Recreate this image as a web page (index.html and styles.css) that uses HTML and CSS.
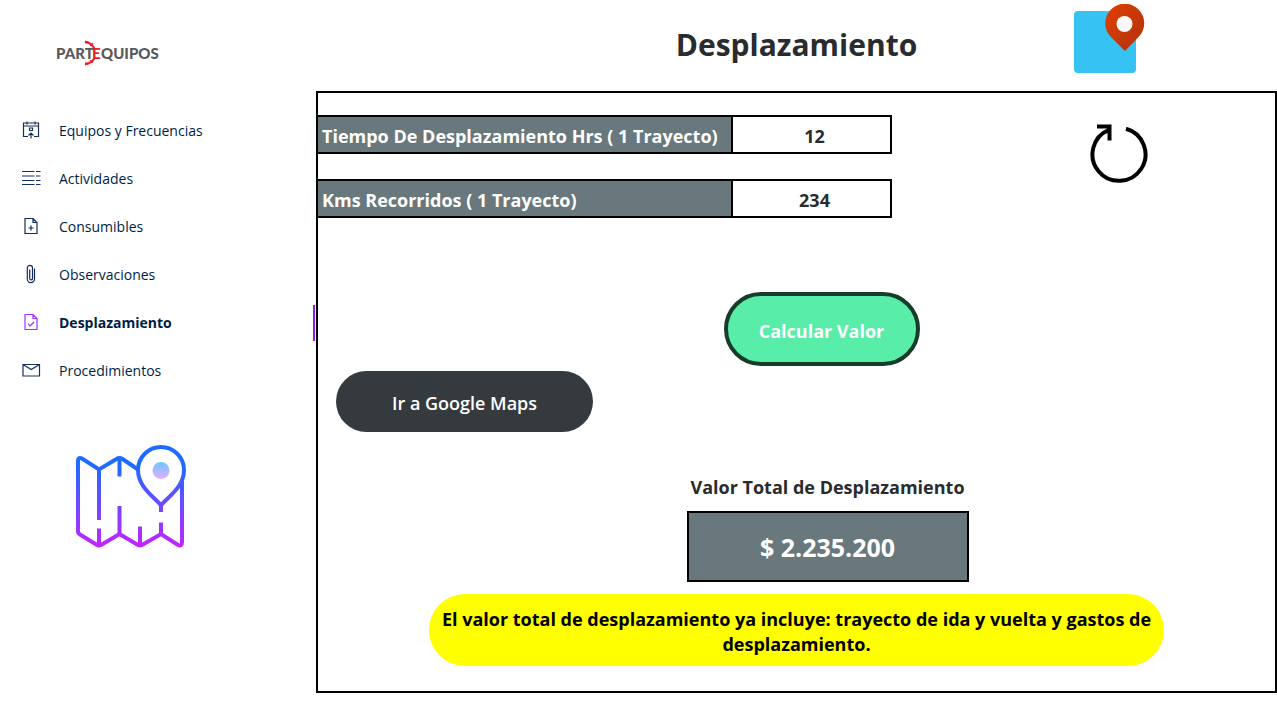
FILE: index.html
```html
<!DOCTYPE html>
<html lang="es">
<head>
<meta charset="utf-8">
<meta name="viewport" content="width=device-width, initial-scale=1">
<title>Desplazamiento</title>
<link rel="stylesheet" href="styles.css">
</head>
<body>
<div class="app">
  <aside class="sidebar">
    <svg class="logo" viewBox="0 0 104 26" role="img" aria-label="Partequipos">
      <text class="logo-text" x="0" y="19">PART</text>
      <text class="logo-text logo-red" x="36" y="19">E</text>
      <text class="logo-text" x="45" y="19">QUIPOS</text>
      <path d="M29 1.500Q36 3 38.500 9M29 24.500Q36 23 38.500 18" fill="none" stroke="#e8202a" stroke-width="2"/>
      <path d="M29 2.500h3M34 5.500l3-2M29 23.500h3M34 20.500l3 2" fill="none" stroke="#e8202a" stroke-width="2"/>
    </svg>
    <nav class="menu">
      <a class="item" href="#equipos">
        <svg class="icon" viewBox="0 0 20 20"><path d="M7 16.500H2.500V3H17.500V16.500H13M2.500 6H17.500M6 1.500V4.500M14 1.500V4.500M8.500 8h3v2.500h-3zM10 18.500V13M7.500 15.500l2.500-2.500 2.500 2.500"/></svg>
        Equipos y Frecuencias</a>
      <a class="item" href="#actividades">
        <svg class="icon" viewBox="0 0 20 20"><path d="M1 3.500H13.500M1 8H13.500M1 12.500H13.500M1 16.500H13.500M15 3.500H19.500M15 8H19.500M15 12.500H19.500M15 16.500H19.500"/></svg>
        Actividades</a>
      <a class="item" href="#consumibles">
        <svg class="icon" viewBox="0 0 20 20"><path d="M4 2.500H12L16 6.500V17.500H4ZM12 2.500V6.500H16M10 9.500V14.500M7.500 12H12.500"/></svg>
        Consumibles</a>
      <a class="item" href="#observaciones">
        <svg class="icon" viewBox="0 0 20 20"><path d="M13.500 4.500V15a3.600 3.600 0 0 1-7.200 0V4a2.600 2.600 0 0 1 5.200 0V14.500a1.400 1.400 0 0 1-2.800 0V5.500"/></svg>
        Observaciones</a>
      <a class="item active" href="#desplazamiento" aria-current="page">
        <svg class="icon" viewBox="0 0 20 20"><path d="M4 2.500H12L16 6.500V17.500H4ZM12 2.500V6.500H16M7 11.500l2 2.500 4-4"/></svg>
        Desplazamiento</a>
      <a class="item" href="#procedimientos">
        <svg class="icon" viewBox="0 0 20 20"><path d="M2 4.500H18.500V16H2ZM2 4.500l8.200 5 8.300-5"/></svg>
        Procedimientos</a>
    </nav>
    <svg class="map" viewBox="0 0 112 104" aria-hidden="true">
      <defs>
        <linearGradient id="line" gradientUnits="userSpaceOnUse" x1="0" y1="0" x2="0" y2="104">
          <stop offset="0" stop-color="#1a6dff"/><stop offset=".2" stop-color="#1f6bff"/><stop offset="1" stop-color="#c822ff"/>
        </linearGradient>
        <linearGradient id="dot" x1="0" y1="0" x2="0" y2="1">
          <stop offset="0" stop-color="#6dc7ff"/><stop offset="1" stop-color="#e6abff"/>
        </linearGradient>
      </defs>
      <g fill="none" stroke="url(#line)" stroke-width="4">
        <path d="M63 24.500L47.500 14Q44.500 12 41.500 14L24 24.500L7 13.500Q3 11.500 3 16V86Q3 88.500 5 89.500L22 100Q24 101 26 100L44.500 89L63 100Q65 101 67 100L86 89L103 100Q107 102 107 97V36"/>
        <path d="M24 24V75M24 83.500V100M44.500 13V31.500M44.500 61V89M65 81.500V100M86 60V67M86 77.500V89"/>
        <path d="M86 60.500C81 53 63 43 63 25A23 23 0 0 1 109 25C109 43 91 53 86 60.500Z" fill="#fff"/>
      </g>
      <circle cx="86" cy="25.500" r="8.500" fill="url(#dot)"/>
    </svg>
  </aside>
  <main class="main">
    <header class="header">
      <h1 class="title">Desplazamiento</h1>
      <svg class="place" viewBox="0 0 72 70" aria-hidden="true">
        <defs><linearGradient id="pin" x1="0" y1="0" x2="1" y2="1"><stop offset="0" stop-color="#e04000"/><stop offset="1" stop-color="#b0310f"/></linearGradient></defs>
        <rect x="1" y="7" width="62" height="62" rx="4" fill="#36c2f3"/>
        <path d="M52 47L38 33A19.500 19.500 0 1 1 65.500 33Z" fill="url(#pin)"/>
        <circle cx="51.500" cy="20" r="8" fill="#f8f8f8"/>
      </svg>
    </header>
    <section class="panel">
      <div class="top">
        <form class="fields">
          <div class="field"><label class="label" for="hrs">Tiempo De Desplazamiento Hrs ( 1 Trayecto)</label><input class="value" id="hrs" type="text" value="12"></div>
          <div class="field"><label class="label" for="kms">Kms Recorridos ( 1 Trayecto)</label><input class="value" id="kms" type="text" value="234"></div>
        </form>
        <button class="reset" type="button" aria-label="Reiniciar">
          <svg class="reset-icon" viewBox="0 0 60 60"><path d="M37 5.800A26.500 26.500 0 1 1 20 6.800M8 3.500H20.500V17.500" fill="none" stroke="#000" stroke-width="4"/></svg>
        </button>
      </div>
      <div class="calc"><button class="btn btn-calc" type="button">Calcular Valor</button></div>
      <div class="maps"><a class="btn btn-maps" href="#maps">Ir a Google Maps</a></div>
      <div class="result">
        <h2 class="result-label">Valor Total de Desplazamiento</h2>
        <output class="total">$ 2.235.200</output>
      </div>
      <p class="note">El valor total de desplazamiento ya incluye: trayecto de ida y vuelta y gastos de desplazamiento.</p>
    </section>
  </main>
</div>
</body>
</html>
```
FILE: styles.css
```css
* { box-sizing: border-box; }
body {
  margin: 0;
  background: #fff;
  color: #292c2e;
  font-family: "Open Sans", "Noto Sans", sans-serif;
  font-size: 18px;
  font-weight: 660;
}
.app { display: grid; grid-template-columns: 316px 1fr; }

.sidebar { padding-top: 40px; }
.logo { display: block; width: 104px; height: 26px; margin-left: 56px; }
.logo-text { font: 900 15px Lato, sans-serif; fill: #58595b; }
.logo-red { fill: #e8202a; }
.menu { margin-top: 40px; }
.item {
  display: flex;
  align-items: center;
  gap: 18px;
  height: 48px;
  padding-left: 21px;
  color: #001d48;
  font-size: 14px;
  font-weight: 400;
  text-decoration: none;
  position: relative;
}
.icon { width: 20px; height: 20px; fill: none; stroke: #14305a; stroke-width: 1.2; }
.active { font-weight: 700; }
.active .icon { stroke: #a033ff; }
.active::after {
  content: "";
  position: absolute;
  right: 1px;
  top: 7px;
  width: 2px;
  height: 36px;
  background: #8a1cf0;
}
.map { display: block; width: 112px; height: 104px; margin: 51px 0 0 75px; }

.header {
  display: grid;
  grid-template-columns: 1fr auto 1fr;
  align-items: center;
  height: 91px;
}
.title { grid-column: 2; margin: 0 0 2px; font-size: 30px; line-height: 42px; font-weight: 700; }
.place { width: 72px; height: 70px; margin: 0 132px 14px 0; justify-self: end; }

.panel { border: 2px solid #000; padding: 22px 0 25px; }
.top { display: flex; justify-content: space-between; }
.fields { width: 574px; display: grid; gap: 25px; }
.field { display: flex; height: 39px; }
.label {
  flex: 1;
  padding-left: 4px;
  border: 2px solid #000;
  border-left: 0;
  background: #69787c;
  color: #fff;
  line-height: 38px;
}
.value {
  width: 159px;
  padding: 2px 0 0 6px;
  border: 2px solid #000;
  border-left: 0;
  background: #fff;
  color: #292c2e;
  font: inherit;
  text-align: center;
}
.reset { margin: 8px 126px 0 0; padding: 0; width: 60px; height: 60px; border: 0; background: none; }
.reset-icon { display: block; width: 60px; height: 60px; }

.btn {
  display: inline-flex;
  align-items: center;
  justify-content: center;
  padding: 3px 0 0;
  color: #fff;
  font: inherit;
  text-decoration: none;
}
.calc { display: flex; justify-content: center; margin-top: 74px; padding-left: 50px; }
.btn-calc {
  width: 196px;
  height: 74px;
  border: 4px solid #163d2a;
  border-radius: 37px;
  background: #58eeaa;
}
.maps { display: flex; margin: 5px 0 0 18px; }
.btn-maps { width: 257px; height: 61px; border-radius: 31px; background: #343a3e; font-weight: 600; }
.result {
  display: flex;
  flex-direction: column;
  align-items: center;
  margin-top: 42px;
  padding-left: 62px;
}
.result-label { margin: 0; font-size: 18px; line-height: 26px; font-weight: 660; }
.total {
  width: 282px;
  margin-top: 11px;
  padding-top: 2px;
  border: 2px solid #000;
  background: #69787c;
  color: #fff;
  font-size: 25px;
  line-height: 65px;
  text-align: center;
}
.note {
  max-width: 735px;
  margin: 12px auto 0;
  padding: 13px 10px 9px;
  border-radius: 36px;
  background: #ff0;
  color: #000;
  line-height: 25px;
  text-align: center;
}
```
